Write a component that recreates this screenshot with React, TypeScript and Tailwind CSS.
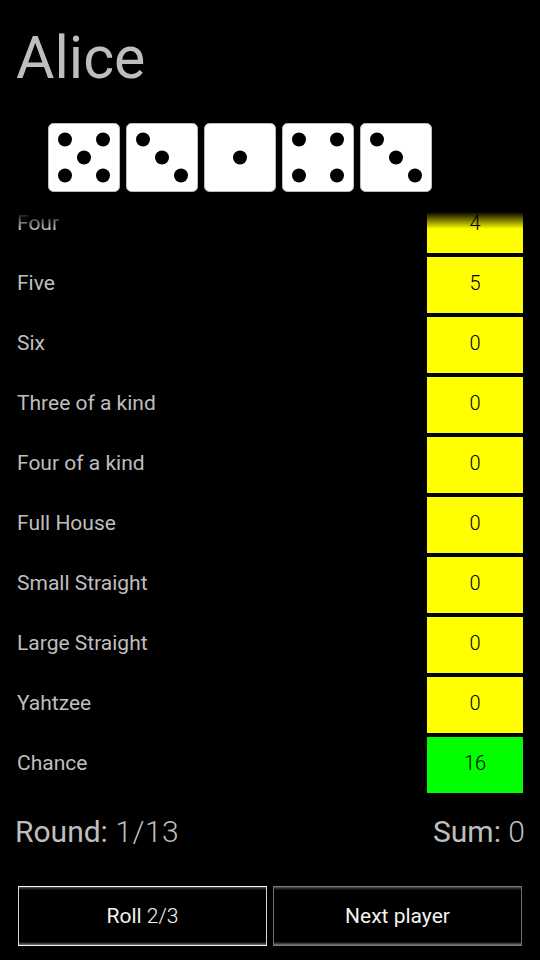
const font = { fontFamily: "Roboto, sans-serif" };

const rows = [
  { label: "Four", value: 4, color: "bg-[#ffff00]" },
  { label: "Five", value: 5, color: "bg-[#ffff00]" },
  { label: "Six", value: 0, color: "bg-[#ffff00]" },
  { label: "Three of a kind", value: 0, color: "bg-[#ffff00]" },
  { label: "Four of a kind", value: 0, color: "bg-[#ffff00]" },
  { label: "Full House", value: 0, color: "bg-[#ffff00]" },
  { label: "Small Straight", value: 0, color: "bg-[#ffff00]" },
  { label: "Large Straight", value: 0, color: "bg-[#ffff00]" },
  { label: "Yahtzee", value: 0, color: "bg-[#ffff00]" },
  { label: "Chance", value: 16, color: "bg-[#00ff00]" },
];

const pips: Record<number, [number, number][]> = {
  1: [[36, 34.5]],
  3: [[17, 16.5], [36, 34.5], [55, 52.5]],
  4: [[17, 16.5], [55, 16.5], [17, 52.5], [55, 52.5]],
  5: [[17, 16.5], [55, 16.5], [36, 34.5], [17, 52.5], [55, 52.5]],
};

function Die({ n }: { n: number }) {
  return (
    <svg width="72" height="69" viewBox="0 0 72 69" className="block">
      <rect x="0.5" y="0.5" width="71" height="68" rx="5" fill="#fff" stroke="#bdbdbd" />
      {pips[n].map(([x, y], i) => (
        <circle key={i} cx={x} cy={y} r="7" fill="#000" />
      ))}
    </svg>
  );
}

function GameButton({ active, children }: { active?: boolean; children: React.ReactNode }) {
  return (
    <button
      className={`relative flex h-[60px] w-[249px] items-center justify-center border-x-[1.5px] border-y-[1.5px] bg-black pt-[2px] text-[21px] text-[#f2f2f2] ${
        active ? "border-x-[#d8d8d8] border-y-[#f4f4f4]" : "border-x-[#6e6e6e] border-y-[#7a7a7a]"
      }`}
    >
      <span className="absolute inset-x-0 top-0 h-[4px] bg-gradient-to-b from-[#555] to-black" />
      <span className="absolute inset-x-0 bottom-0 h-[4px] bg-gradient-to-t from-[#777] to-black" />
      <span>{children}</span>
    </button>
  );
}

export default function App() {
  return (
    <div className="flex h-[960px] w-[540px] flex-col overflow-hidden bg-black" style={font}>
      <h1 className="mt-[22px] h-[72px] pl-[16px] text-[59px] leading-[72px] text-[#bebebe]">Alice</h1>

      <div className="mt-[29px] flex gap-[6px] pl-[48px]">
        {[5, 3, 1, 4, 3].map((n, i) => (
          <Die key={i} n={n} />
        ))}
      </div>

      <div className="relative mt-[20px] flex h-[585px] flex-col justify-end gap-[4px] overflow-hidden pb-[4px] pl-[17px] pr-[17px]">
        {rows.map((row) => (
          <div key={row.label} className="flex h-[56px] shrink-0 items-center justify-between">
            <span className="mb-[2px] text-[21px] text-[#bebebe]">{row.label}</span>
            <div className={`flex h-[56px] w-[96px] items-center justify-center pb-[4px] text-[20px] font-light text-black ${row.color}`}>
              {row.value}
            </div>
          </div>
        ))}
        <div className="absolute inset-x-0 top-0 h-[17px] bg-gradient-to-b from-black to-transparent" />
      </div>

      <div className="mt-[14px] flex h-[40px] items-center justify-between pl-[15px] pr-[15px] text-[30px] text-[#bebebe]">
        <span>
          Round: <span className="font-light tracking-[0.5px]">1/13</span>
        </span>
        <span>
          Sum: <span className="font-light">0</span>
        </span>
      </div>

      <div className="mt-[35px] flex gap-[6px] pl-[18px]">
        <GameButton active>
          Roll <span className="font-light">2/3</span>
        </GameButton>
        <GameButton>Next player</GameButton>
      </div>
    </div>
  );
}
